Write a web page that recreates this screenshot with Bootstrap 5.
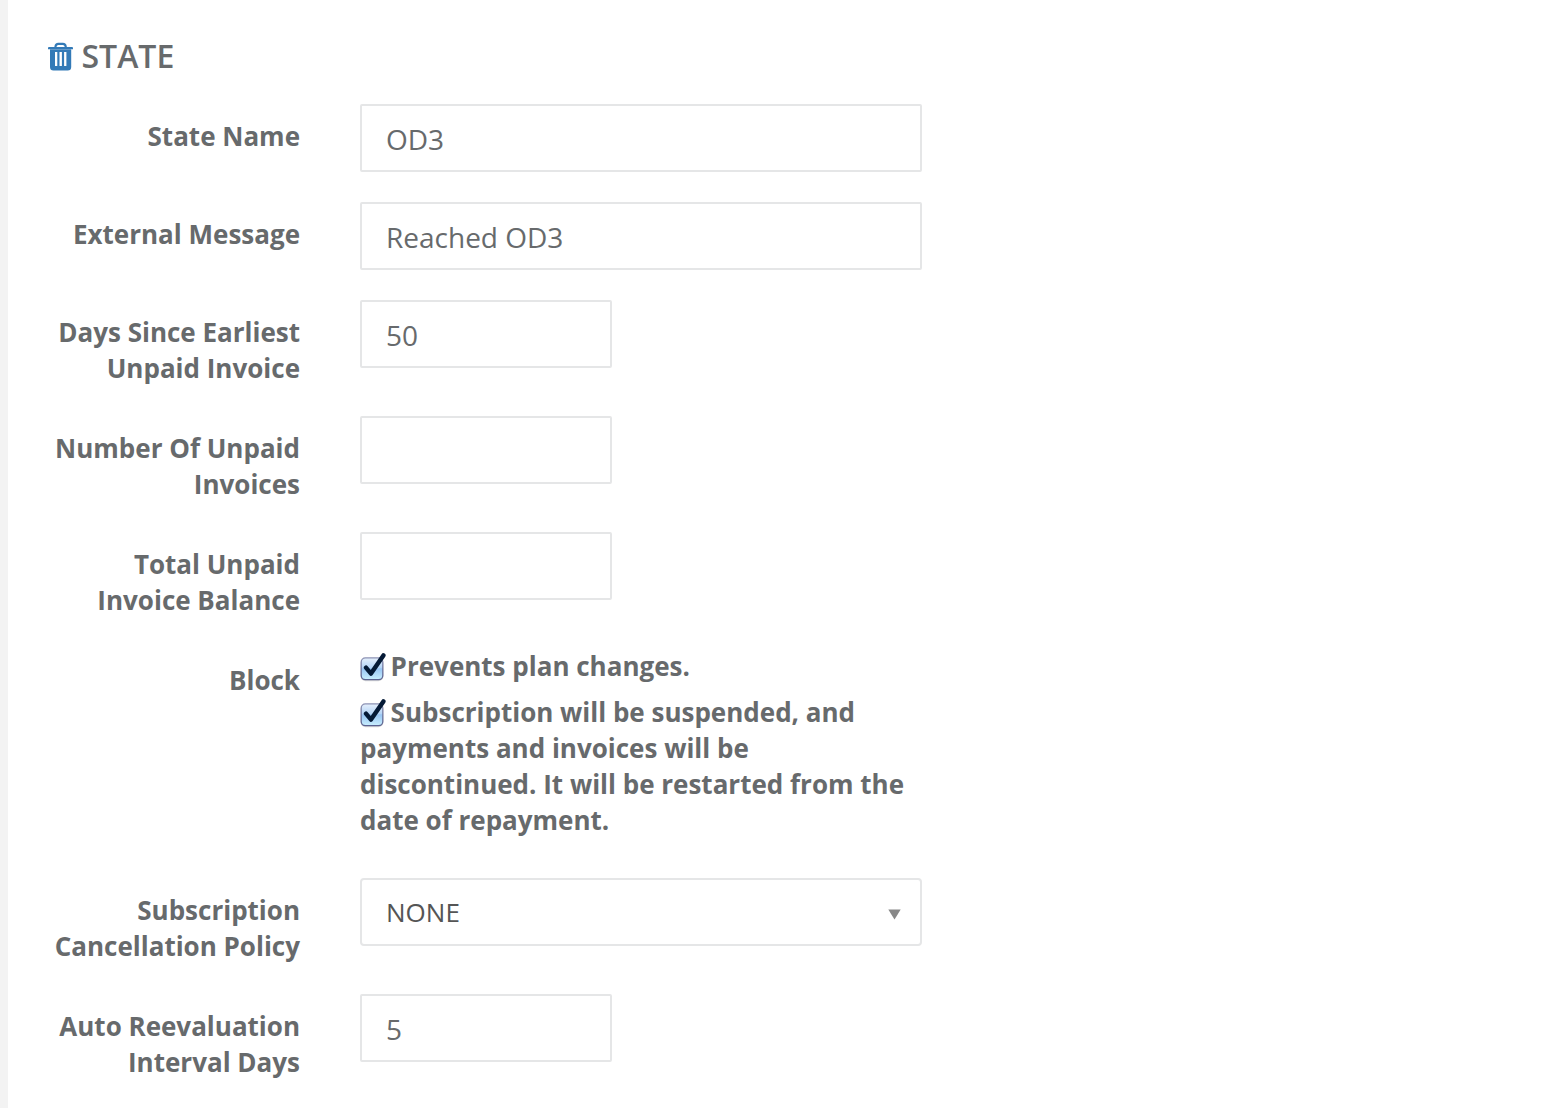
<!DOCTYPE html>
<html lang="en">
<head>
<meta charset="utf-8">
<title>State</title>
<link rel="stylesheet" href="https://cdn.jsdelivr.net/npm/bootstrap@5.3.0/dist/css/bootstrap.min.css">
<style>
body{font-family:"Open Sans",sans-serif;font-size:26px;line-height:36px;color:#676a6c;background:#fff;overflow:hidden}
.panel-body{border-left:8px solid #f3f3f3;height:1108px;padding:36px 0 0 40px}
.state-title{font-size:32px;font-weight:600;line-height:40px;margin:0 0 28px;gap:7.5px}
.field{margin-bottom:30px;gap:60px}
.field-label{width:252px;padding-top:14px;font-weight:700;text-align:right;flex:none}
.form-control,.form-select{height:68px;border:2px solid #e5e6e7;border-radius:2px;padding:2px 24px 0;font-size:28px;color:#676a6c;background-color:#fff;width:562px}
.form-control.short{width:252px}
.form-select{border-radius:4px;font-size:26px;color:#555;padding:0 24px 0 24px;background-image:none}
.select-box{width:562px}
.select-arrow{right:21.5px;top:30.5px;pointer-events:none}
.checks{width:562px;font-weight:700}
.checks label{display:block;margin-bottom:10px}
.tick{width:27px;height:30px;margin:-8px 4.6px -6px -1px;vertical-align:baseline}
</style>
<script src="https://cdn.jsdelivr.net/npm/bootstrap@5.3.0/dist/js/bootstrap.bundle.min.js"></script>
</head>
<body>
<svg width="0" height="0" class="position-absolute" aria-hidden="true">
<defs>
<linearGradient id="boxFill" x1="0" y1="0" x2="0" y2="1"><stop offset="0" stop-color="#e6f0fc"/><stop offset=".45" stop-color="#b5d5f7"/><stop offset=".5" stop-color="#98c5f3"/><stop offset="1" stop-color="#c9effe"/></linearGradient>
<linearGradient id="boxEdge" x1="0" y1="0" x2="0" y2="1"><stop offset="0" stop-color="#8c92b4"/><stop offset="1" stop-color="#5a6290"/></linearGradient>
<symbol id="tick" viewBox="0 0 27 30">
<rect x="1.6" y="6.5" width="22.8" height="22.7" rx="5" fill="#000" opacity=".15"/>
<rect x="2.2" y="5.9" width="21.6" height="21.8" rx="4.2" fill="url(#boxFill)" stroke="url(#boxEdge)" stroke-width="1.3"/>
<path d="M7 15.6 12 21.6 24.4 3.4" fill="none" stroke="#051a36" stroke-width="4.4" stroke-linecap="round" stroke-linejoin="round"/>
</symbol>
</defs>
</svg>
<form class="panel-body">
<h2 class="state-title d-flex align-items-center">
<svg width="26" height="29" viewBox="0 0 26 29" fill="none" aria-label="Delete"><path d="M7.5 6V4.5Q7.8 1.8 10.3 1.8H14.9Q17.4 1.8 17.7 4.5V6" stroke="#337ab7" stroke-width="2.2"/><path fill="#337ab7" fill-rule="evenodd" d="M1 5H24Q25 5 25 6V7.3H0V6Q0 5 1 5ZM2 7H23.2V25Q23.2 28.5 19.7 28.5H5.5Q2 28.5 2 25ZM7 10V24H9.3V10ZM11.5 10V24H13.9V10ZM16.1 10V24H18.4V10Z"/></svg>
<span>STATE</span></h2>
<div class="field d-flex align-items-start"><label class="field-label" for="f1">State Name</label><input id="f1" class="form-control" value="OD3"></div>
<div class="field d-flex align-items-start"><label class="field-label" for="f2">External Message</label><input id="f2" class="form-control" value="Reached OD3"></div>
<div class="field d-flex align-items-start"><label class="field-label" for="f3">Days Since Earliest Unpaid Invoice</label><input id="f3" class="form-control short" value="50"></div>
<div class="field d-flex align-items-start"><label class="field-label" for="f4">Number Of Unpaid Invoices</label><input id="f4" class="form-control short"></div>
<div class="field d-flex align-items-start"><label class="field-label" for="f5">Total Unpaid<br>Invoice Balance</label><input id="f5" class="form-control short"></div>
<div class="field d-flex align-items-start"><span class="field-label">Block</span>
<div class="checks">
<label><svg class="tick"><use href="#tick"/></svg>Prevents plan changes.</label>
<label><svg class="tick"><use href="#tick"/></svg>Subscription will be suspended, and<br>payments and invoices will be<br>discontinued. It will be restarted from the<br>date of repayment.</label>
</div></div>
<div class="field d-flex align-items-start"><label class="field-label" for="f6">Subscription Cancellation Policy</label>
<div class="select-box position-relative"><select id="f6" class="form-select"><option>NONE</option></select><svg class="select-arrow position-absolute" width="13" height="11" viewBox="0 0 13 11"><path d="M.3.5H12.7L6.5 10.5Z" fill="#888"/></svg></div></div>
<div class="field d-flex align-items-start"><label class="field-label" for="f7">Auto Reevaluation Interval Days</label><input id="f7" class="form-control short" value="5"></div>
</form>
</body>
</html>
